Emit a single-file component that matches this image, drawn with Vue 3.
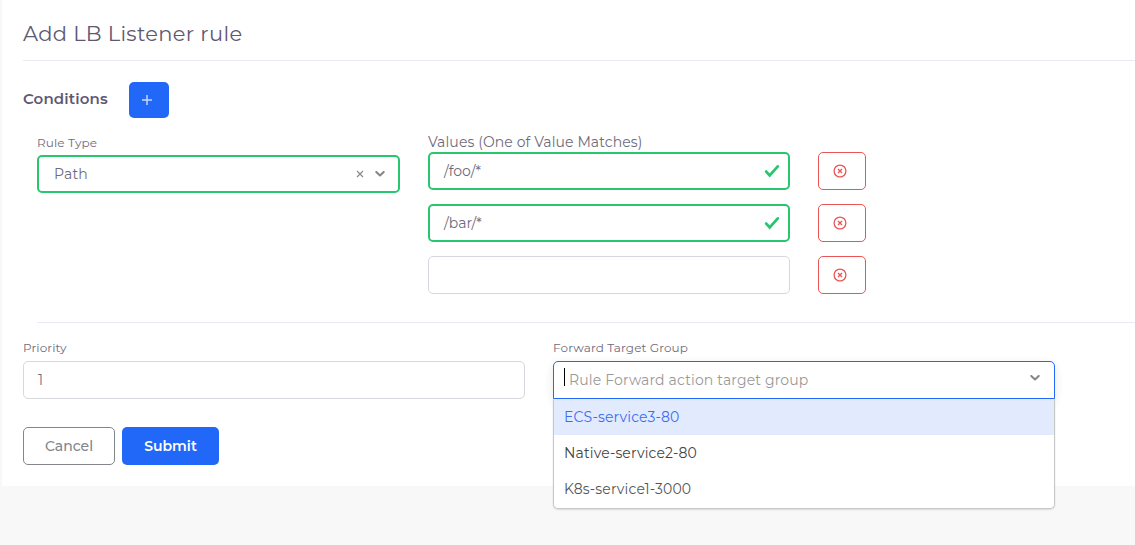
<script setup>
import { ref } from 'vue'

const values = ref(['/foo/*', '/bar/*', ''])
const priority = ref('1')
const groups = [
  { name: 'ECS-service3-80', cls: 'ecs' },
  { name: 'Native-service2-80', cls: 'native' },
  { name: 'K8s-service1-3000', cls: 'k8s' }
]
</script>

<template>
  <div class="page">
    <main class="card">
      <h1><span>Add LB Listener rule</span></h1>
      <section class="conditions">
        <div class="head">
          <h2>Conditions</h2>
          <button class="add" aria-label="Add condition">
            <svg width="14" height="14" viewBox="0 0 14 14"><path d="M7 2v10M2 7h10" /></svg>
          </button>
        </div>
        <div class="rule">
          <div class="type">
            <label class="small rule-label">Rule Type</label>
            <div class="select valid">
              <span class="path">Path</span>
              <svg class="clear" width="8" height="8" viewBox="0 0 8 8"><path d="M1 1l6 6M7 1L1 7" /></svg>
              <svg class="chevron" width="10" height="6" viewBox="0 0 10 6"><path d="M1.3 1L5 4.5 8.7 1" /></svg>
            </div>
          </div>
          <div class="values">
            <label class="values-label">Values (One of Value Matches)</label>
            <div v-for="(v, i) in values" :key="i" class="value-row">
              <div class="field" :class="{ valid: v }">
                <span class="value">{{ v }}</span>
                <svg v-if="v" class="check" width="16" height="14" viewBox="0 0 16 14"><path d="M2.2 7.6l3.5 3.8 8.1-9" /></svg>
              </div>
              <button class="remove" aria-label="Remove value">
                <svg width="14" height="14" viewBox="0 0 14 14"><circle cx="7" cy="7" r="5.9" /><path d="M5 5l4 4M9 5L5 9" /></svg>
              </button>
            </div>
          </div>
        </div>
      </section>
      <section class="bottom">
        <div class="col">
          <label class="small priority-label">Priority</label>
          <div class="field"><span class="value">{{ priority }}</span></div>
        </div>
        <div class="col">
          <label class="small group-label">Forward Target Group</label>
          <div class="combo">
            <div class="select open">
              <i class="caret"></i>
              <span class="placeholder">Rule Forward action target group</span>
              <svg class="chevron" width="10" height="6" viewBox="0 0 10 6"><path d="M1.3 1L5 4.5 8.7 1" /></svg>
            </div>
            <ul class="menu">
              <li v-for="g in groups" :key="g.name"><span :class="g.cls">{{ g.name }}</span></li>
            </ul>
          </div>
        </div>
      </section>
      <div class="actions">
        <button class="cancel"><span>Cancel</span></button>
        <button class="submit"><span>Submit</span></button>
      </div>
    </main>
  </div>
</template>

<style>
body { background: #f8f8f8; overflow: hidden; }
</style>

<style scoped>
* { box-sizing: border-box; }
.page { height: 545px; padding-left: 2px; background: #f8f8f8; font: 400 14px/20px Montserrat, Inter, sans-serif; letter-spacing: .14px; color: #6e6b7b; }
.card { height: 486px; background: #fff; padding-left: 21px; }
h1 { margin: 0; height: 61px; padding-top: 19px; border-bottom: 1px solid #ebe9f1; font-size: 21px; line-height: 30px; font-weight: 400; color: #5e5873; }
h1 span { letter-spacing: .3px; }
.head { display: flex; height: 36px; margin-top: 21px; }
h2 { margin: 0; width: 106px; font-size: 15px; line-height: 34px; font-weight: 600; color: #5e5873; letter-spacing: .14px; }
button { display: flex; align-items: center; justify-content: center; padding: 0; margin: 0; border: 0; border-radius: 5px; font: 500 14px/18px Montserrat, Inter, sans-serif; }
svg { display: block; flex: none; fill: none; }
.add { width: 40px; height: 36px; background: #2168f8; padding-right: 4px; }
.add path { stroke: #c9dafe; stroke-width: 1.4; }
.rule { display: flex; gap: 28px; margin-left: 14px; height: 205px; border-bottom: 1px solid #ebe9f1; }
.type { width: 363px; padding-top: 16px; }
label { display: block; white-space: nowrap; }
.small { font-size: 12px; line-height: 17px; height: 21px; letter-spacing: .12px; }
.values { padding-top: 14px; }
.values-label { height: 20px; letter-spacing: .11px; }
.value-row { display: flex; gap: 28px; margin-bottom: 14px; }
.value-row .field { width: 362px; }
.field, .select { display: flex; align-items: center; height: 38px; border: 1px solid #d8d6de; border-radius: 5px; background: #fff; }
.field { padding: 0 10px 0 14px; }
.value { flex: 1; letter-spacing: 0; }
.valid { border: 2px solid #28c76f; }
.field.valid { padding-left: 14px; padding-right: 8px; }
.check path { stroke: #28c76f; stroke-width: 2.8; stroke-linecap: round; }
.type .select { padding: 0 13.5px 0 15px; }
.path { flex: 1; }
.clear path { stroke: #888; stroke-width: 1.2; }
.clear { margin-right: 10.5px; }
.chevron path { stroke: #858585; stroke-width: 2; stroke-linecap: round; stroke-linejoin: round; }
.remove { width: 48px; height: 38px; border: 1px solid #ea5455; background: #fff; padding-right: 4px; }
.remove svg { stroke: #ea5455; stroke-width: 1.3; }
.bottom { display: flex; gap: 28px; padding-top: 16px; }
.bottom .small { height: 22px; }
.col { width: 502px; }
.combo { position: relative; }
.open { border-color: #2168f8; border-radius: 5px 5px 0 0; padding: 0 14px 0 10px; box-shadow: 0 3px 10px rgba(34, 41, 47, .1); }
.caret { width: 1px; height: 18px; background: #000; margin: -7px 4px 0 0; }
.placeholder { flex: 1; color: #999; letter-spacing: .16px; }
.open .chevron { margin-top: -5px; }
.menu { position: absolute; z-index: 2; top: 38px; left: 0; width: 502px; height: 110px; margin: 0; padding: 0; list-style: none; border: 1px solid #c7c7c7; border-top: 0; border-radius: 0 0 5px 5px; background: #fff; overflow: hidden; box-shadow: 0 1px 2px rgba(0, 0, 0, .12); }
.menu li { height: 36px; padding-left: 10px; line-height: 36px; color: #444; }
.menu .k8s { color: #555; }
.menu li:first-child { background: #e2ebfd; color: #3a6cf5; }
.actions { display: flex; gap: 7px; margin-top: 28px; }
.cancel { width: 92px; height: 38px; border: 1px solid #82868b; background: #fff; color: #82868b; }
.submit { width: 97px; height: 38px; background: #2168f8; color: #fff; font-weight: 600; }
</style>
